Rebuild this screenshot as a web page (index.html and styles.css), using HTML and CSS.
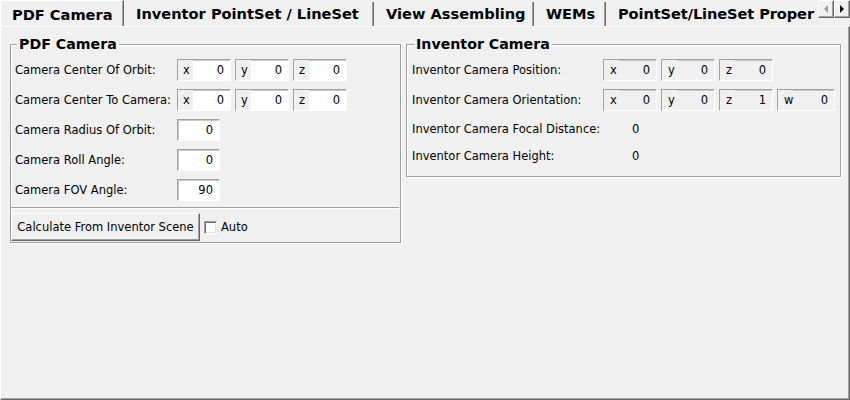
FILE: index.html
```
<!DOCTYPE html>
<html>
<head>
<meta charset="utf-8">
<link rel="stylesheet" href="styles.css">
</head>
<body>
<div class="window">
  <div class="tabbar">
    <div class="tab active t1">PDF Camera</div>
    <div class="tab t2">Inventor PointSet / LineSet</div>
    <div class="tab t3">View Assembling</div>
    <div class="tab t4">WEMs</div>
    <div class="tab t5">PointSet/LineSet Proper</div>
    <div class="scroller">
      <span class="sbtn"><svg width="5" height="8" viewBox="0 0 5 8"><path d="M4 0 L0 4 L4 8 Z" fill="#a0a0a0"/></svg></span>
      <span class="sbtn"><svg width="5" height="8" viewBox="0 0 5 8"><path d="M0 0 L4 4 L0 8 Z" fill="#000"/></svg></span>
    </div>
  </div>
  <div class="panel">
    <fieldset class="group group-left">
      <legend>PDF Camera</legend>
      <div class="row">
        <span class="label">Camera Center Of Orbit:</span>
        <div class="vec">
          <span class="comp"><i>x</i><b>0</b></span>
          <span class="comp"><i>y</i><b>0</b></span>
          <span class="comp"><i>z</i><b>0</b></span>
        </div>
      </div>
      <div class="row">
        <span class="label">Camera Center To Camera:</span>
        <div class="vec">
          <span class="comp"><i>x</i><b>0</b></span>
          <span class="comp"><i>y</i><b>0</b></span>
          <span class="comp"><i>z</i><b>0</b></span>
        </div>
      </div>
      <div class="row">
        <span class="label">Camera Radius Of Orbit:</span>
        <span class="num">0</span>
      </div>
      <div class="row">
        <span class="label">Camera Roll Angle:</span>
        <span class="num">0</span>
      </div>
      <div class="row">
        <span class="label">Camera FOV Angle:</span>
        <span class="num">90</span>
      </div>
      <div class="sep"></div>
      <div class="actions">
        <button class="btn">Calculate From Inventor Scene</button>
        <span class="check"><span class="cbox"></span>Auto</span>
      </div>
    </fieldset>
    <fieldset class="group group-right">
      <legend>Inventor Camera</legend>
      <div class="row">
        <span class="label rlabel">Inventor Camera Position:</span>
        <div class="vec ro">
          <span class="comp"><i>x</i><b>0</b></span>
          <span class="comp"><i>y</i><b>0</b></span>
          <span class="comp"><i>z</i><b>0</b></span>
        </div>
      </div>
      <div class="row">
        <span class="label rlabel">Inventor Camera Orientation:</span>
        <div class="vec ro">
          <span class="comp"><i>x</i><b>0</b></span>
          <span class="comp"><i>y</i><b>0</b></span>
          <span class="comp"><i>z</i><b>1</b></span>
          <span class="comp wide"><i>w</i><b>0</b></span>
        </div>
      </div>
      <div class="row short">
        <span class="label vlabel">Inventor Camera Focal Distance:</span>
        <span class="val">0</span>
      </div>
      <div class="row short">
        <span class="label vlabel">Inventor Camera Height:</span>
        <span class="val">0</span>
      </div>
    </fieldset>
  </div>
</div>
</body>
</html>
```
FILE: styles.css
```
html, body {
  margin: 0;
  padding: 0;
}
body {
  background: #f0f0f0;
  font-family: "DejaVu Sans", Verdana, sans-serif;
  font-size: 11.5px;
  color: #000;
  width: 850px;
  height: 400px;
  overflow: hidden;
}
.window {
  width: 850px;
  height: 400px;
  display: flex;
  flex-direction: column;
  position: relative;
}
.tabbar {
  height: 26px;
  display: flex;
  align-items: flex-start;
  position: relative;
  flex: none;
}
.tab {
  flex: none;
  box-sizing: border-box;
  height: 24px;
  margin-top: 2px;
  padding-left: 12px;
  font-weight: bold;
  font-size: 14.6px;
  line-height: 24px;
  white-space: nowrap;
  border-right: 1px solid #696969;
  box-shadow: inset -1px 0 0 #a0a0a0;
}
.tab.active {
  height: 26px;
  margin-top: 0;
  padding-top: 2px;
  line-height: 24px;
  border-left: 1px solid #fff;
  border-top: 1px solid #fff;
  padding-left: 11px;
}
.t1 { width: 124px; }
.t2 { width: 250px; }
.t3 { width: 160px; }
.t4 { width: 72px; }
.t5 { padding-right: 0; border-right: none; box-shadow: none; letter-spacing: -0.1px; }
.scroller {
  position: absolute;
  left: 818px;
  top: 0;
  display: flex;
}
.sbtn {
  box-sizing: border-box;
  width: 16px;
  height: 18px;
  display: flex;
  align-items: center;
  justify-content: center;
  background: #f0f0f0;
  border-top: 1px solid #fff;
  border-left: 1px solid #fff;
  border-right: 1px solid #696969;
  border-bottom: 1px solid #696969;
  box-shadow: inset -1px -1px 0 #a0a0a0;
}
.panel {
  flex: 1;
  box-sizing: border-box;
  border-top: 1px solid #fff;
  border-left: 1px solid #fff;
  border-right: 1px solid #696969;
  border-bottom: 1px solid #696969;
  box-shadow: inset -1px -1px 0 #a0a0a0;
  padding: 9px 0 0 9px;
  display: flex;
  align-items: flex-start;
  gap: 5px;
}
.group {
  margin: 0;
  border: 1px solid #a0a0a0;
  box-shadow: inset 1px 1px 0 #fff, 1px 1px 0 #fff;
  padding: 3px 2px 1px 4px;
  min-inline-size: 0;
  box-sizing: border-box;
}
.group legend {
  font-weight: bold;
  font-size: 14.2px;
  line-height: 16px;
  padding: 0 2px;
  margin-left: 2px;
}
.group-left { width: 391px; }
.group-right { width: 435px; padding: 3px 2px 7px 5px; }
.row {
  height: 30px;
  display: flex;
  align-items: center;
}
.row.short { height: 27px; }
.label {
  width: 162px;
  flex: none;
  white-space: nowrap;
}
.rlabel { width: 191px; }
.vlabel { width: 220px; }
.vec {
  display: flex;
  gap: 4px;
}
.comp, .num {
  box-sizing: border-box;
  height: 22px;
  width: 54px;
  display: flex;
  align-items: center;
  border-top: 1px solid #a0a0a0;
  border-left: 1px solid #a0a0a0;
  border-right: 1px solid #fff;
  border-bottom: 1px solid #fff;
  box-shadow: inset 1px 1px 0 #c8c8c8;
  background: #fff;
}
.comp i {
  font-style: normal;
  width: 15px;
  height: 100%;
  padding-left: 5px;
  box-sizing: border-box;
  display: flex;
  align-items: center;
  background: #f0f0f0;
}
.comp b {
  font-weight: normal;
  flex: 1;
  text-align: right;
  padding-right: 6px;
}
.ro .comp {
  width: 54px;
  background: #f0f0f0;
}
.ro .comp i { padding-left: 6px; }
.ro .comp.wide { width: 58px; }
.num {
  width: 43px;
  justify-content: flex-end;
  padding-right: 6px;
}
.val { padding-left: 0; }
.sep {
  height: 1px;
  background: #a0a0a0;
  border-bottom: 1px solid #fff;
  margin: 2px -1px 0 -4px;
}
.actions {
  display: flex;
  align-items: center;
  margin: 4px 0 0 -4px;
}
.btn {
  box-sizing: border-box;
  height: 28px;
  width: 189px;
  font: inherit;
  color: #000;
  padding: 0;
  background: #f0f0f0;
  border-top: 1px solid #fff;
  border-left: 1px solid #fff;
  border-right: 1px solid #696969;
  border-bottom: 1px solid #696969;
  box-shadow: inset -1px -1px 0 #a0a0a0;
}
.check {
  display: flex;
  align-items: center;
  gap: 4px;
  margin-left: 4px;
}
.cbox {
  box-sizing: border-box;
  width: 13px;
  height: 13px;
  background: #fff;
  border-top: 1px solid #a0a0a0;
  border-left: 1px solid #a0a0a0;
  border-right: 1px solid #fff;
  border-bottom: 1px solid #fff;
  box-shadow: inset 1px 1px 0 #696969, inset -1px -1px 0 #e3e3e3;
}
```
